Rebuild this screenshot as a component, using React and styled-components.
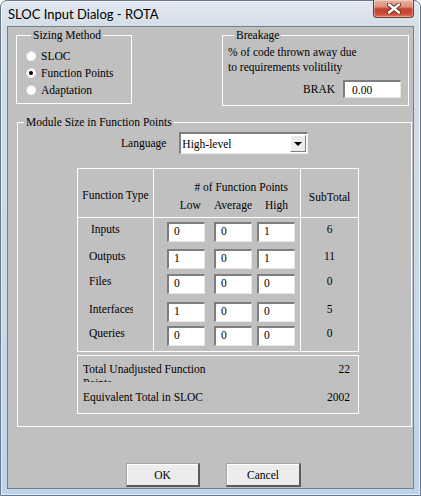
import React from "react";
import styled, { createGlobalStyle } from "styled-components";

const Global = createGlobalStyle`
  html, body { margin: 0; padding: 0; background: #ffffff; }
  body { width: 421px; height: 496px; overflow: hidden; }
  #root { width: 421px; height: 496px; }
`;

const serif = `"Liberation Serif", "Times New Roman", serif`;

const Window = styled.div`
  box-sizing: border-box;
  width: 421px;
  height: 496px;
  display: flex;
  flex-direction: column;
  padding: 0 6px 6px;
  border: 1px solid #65778a;
  border-radius: 7px 7px 0 0;
  background: linear-gradient(to bottom, #e2e9f0 0px, #d5dee7 25px, #cbd9e6 55%, #bcd4ea 100%);
  box-shadow: inset 0 0 0 1px rgba(255, 255, 255, 0.6);
`;

const TitleBar = styled.div`
  height: 25px;
  display: flex;
  align-items: flex-start;
  justify-content: space-between;
  padding-left: 1px;
`;

const TitleText = styled.span`
  font-family: "Segoe UI", Lato, "Noto Sans", sans-serif;
  font-size: 13px;
  line-height: 15px;
  margin-top: 6px;
  color: #000;
`;

const CloseButton = styled.div`
  box-sizing: border-box;
  width: 41px;
  height: 18px;
  margin-top: -1px;
  border: 1px solid #76372c;
  border-top: none;
  border-radius: 0 0 4px 4px;
  background: linear-gradient(to bottom, #e9b3a4 0%, #dc8e7a 40%, #c4442e 52%, #c84a34 78%, #dc7358 100%);
  box-shadow: inset 0 0 0 1px rgba(255, 255, 255, 0.35);
  display: flex;
  align-items: center;
  justify-content: center;
`;

const Client = styled.div`
  flex: 1;
  border: 1px solid #72818f;
  background: #c0c0c0;
  display: flex;
  flex-direction: column;
  font-family: ${serif};
  font-size: 11.5px;
  line-height: 14px;
  color: #000;
`;

const TopRow = styled.div`
  display: flex;
  align-items: flex-start;
  margin-top: 1px;
  padding-left: 8px;
`;

const Group = styled.fieldset`
  box-sizing: border-box;
  margin: 0;
  min-width: 0;
  border: 1px solid #ffffff;
  width: ${(p) => p.$w}px;
  margin-left: ${(p) => p.$ml || 0}px;
  margin-top: ${(p) => p.$mt || 0}px;
  padding: ${(p) => p.$pad};
`;

const Legend = styled.legend`
  padding: 0 2px;
  margin-left: 6px;
  line-height: 14px;
`;

const RadioRow = styled.label`
  display: flex;
  align-items: center;
  height: 17px;
  gap: 4px;
`;

const Radio = styled.span`
  box-sizing: border-box;
  width: 12px;
  height: 12px;
  flex: none;
  border-radius: 50%;
  border: 1px solid #b9b9b9;
  background: radial-gradient(circle at 62% 62%, #ffffff 0%, #ffffff 42%, #e8e8e8 68%, #a9a9a9 100%);
  display: flex;
  align-items: center;
  justify-content: center;
  &::after {
    content: "";
    width: 4px;
    height: 4px;
    border-radius: 50%;
    background: #000;
    display: ${(p) => (p.$checked ? "block" : "none")};
  }
`;

const Line = styled.div`
  line-height: 15px;
  white-space: nowrap;
`;

const BrakRow = styled.div`
  display: flex;
  justify-content: flex-end;
  align-items: center;
  gap: 8px;
  margin-top: 5px;
  padding-right: 7px;
`;

const TextBox = styled.input`
  box-sizing: border-box;
  margin: 0;
  width: ${(p) => p.$w}px;
  height: ${(p) => p.$h}px;
  background: #ffffff;
  border-style: solid;
  border-width: 2px 1px 1px 2px;
  border-color: #7e7e7e #e6e6e6 #e6e6e6 #7e7e7e;
  font-family: ${serif};
  font-size: 11.5px;
  color: #000;
  padding: 0 0 ${(p) => p.$pb || 0}px ${(p) => p.$pl}px;
  outline: none;
`;

const LanguageRow = styled.div`
  display: flex;
  align-items: center;
  gap: 13px;
  margin-left: 103px;
`;

const Select = styled.div`
  box-sizing: border-box;
  width: 129px;
  height: 22px;
  background: #ffffff;
  border-style: solid;
  border-width: 2px 1px 1px 2px;
  border-color: #7e7e7e #ececec #ececec #7e7e7e;
  display: flex;
  align-items: center;
  justify-content: space-between;
  padding: 0 1px 0 1px;
`;

const SelectButton = styled.div`
  box-sizing: border-box;
  width: 16px;
  height: 17px;
  background: #ececec;
  border-style: solid;
  border-width: 1px;
  border-color: #ffffff #808080 #808080 #ffffff;
  display: flex;
  align-items: center;
  justify-content: center;
  &::after {
    content: "";
    width: 0;
    height: 0;
    border-left: 4px solid transparent;
    border-right: 4px solid transparent;
    border-top: 4px solid #000;
  }
`;

const Table = styled.div`
  box-sizing: border-box;
  width: 282px;
  margin: 14px 0 0 59px;
  display: grid;
  grid-template-columns: 76px 147px 58px;
  border-top: 1px solid #ffffff;
  border-left: 1px solid #ffffff;
`;

const Cell = styled.div`
  box-sizing: border-box;
  border-right: 1px solid #ffffff;
  border-bottom: ${(p) => (p.$last ? "1px solid #ffffff" : "none")};
  height: ${(p) => p.$h}px;
`;

const HeadCell = styled(Cell)`
  border-bottom: 1px solid #ffffff;
  display: flex;
  flex-direction: column;
  align-items: ${(p) => p.$align || "center"};
  justify-content: ${(p) => p.$justify || "center"};
  padding-top: ${(p) => p.$pt || 0}px;
  padding-right: ${(p) => p.$pr || 0}px;
  white-space: nowrap;
`;

const SubHead = styled.div`
  display: flex;
  gap: 13px;
  margin-top: 4px;
`;

const LabelCell = styled(Cell)`
  padding: 4px 0 0 ${(p) => 11 + (p.$indent || 0)}px;
`;

const RowLabel = styled.div`
  width: 44px;
  overflow: hidden;
  white-space: nowrap;
`;

const PointsCell = styled(Cell)`
  display: flex;
  align-items: flex-start;
  padding: 4px 0 0 13px;
  & > input:nth-child(2) {
    margin: 0 5px 0 9px;
  }
`;

const SubCell = styled(Cell)`
  text-align: center;
  padding-top: 4px;
`;

const Totals = styled.div`
  box-sizing: border-box;
  width: 282px;
  margin: 3px 0 0 59px;
  border: 1px solid #ffffff;
  padding: 6px 8px 9px 5px;
  display: flex;
  flex-direction: column;
  gap: 8px;
`;

const TotalRow = styled.div`
  display: flex;
  justify-content: space-between;
  align-items: flex-start;
`;

const TotalLabel = styled.div`
  width: ${(p) => p.$w}px;
  height: ${(p) => p.$h}px;
  overflow: hidden;
`;

const ButtonRow = styled.div`
  display: flex;
  gap: 26px;
  margin: 36px 0 0 118px;
`;

const Button = styled.button`
  box-sizing: border-box;
  width: ${(p) => p.$w}px;
  height: 24px;
  margin: 0;
  padding: 0;
  background: #ececec;
  border-style: solid;
  border-width: 1px 2px 2px 1px;
  border-color: #a4a4a4 #5c5c5c #5c5c5c #a4a4a4;
  box-shadow: inset 1px 1px 0 #ffffff;
  font-family: ${serif};
  font-size: 11.5px;
  color: #000;
`;

const rows = [
  { name: "Inputs", indent: 2, vals: ["0", "0", "1"], sub: "6", h: 27 },
  { name: "Outputs", vals: ["1", "0", "1"], sub: "11", h: 25 },
  { name: "Files", vals: ["0", "0", "0"], sub: "0", h: 28 },
  { name: "Interfaces", vals: ["1", "0", "0"], sub: "5", h: 24 },
  { name: "Queries", vals: ["0", "0", "0"], sub: "0", h: 30 },
];

const CloseIcon = () => (
  <svg width="14" height="11" viewBox="0 0 14 11">
    <path d="M2 1.5 L12 9.5 M12 1.5 L2 9.5" stroke="#6a2a20" strokeWidth="4.2" strokeLinecap="round" />
    <path d="M2 1.5 L12 9.5 M12 1.5 L2 9.5" stroke="#ffffff" strokeWidth="2.4" strokeLinecap="round" />
  </svg>
);

export default function App() {
  return (
    <>
      <Global />
      <Window>
        <TitleBar>
          <TitleText>SLOC Input Dialog - ROTA</TitleText>
          <CloseButton>
            <CloseIcon />
          </CloseButton>
        </TitleBar>
        <Client>
          <TopRow>
            <Group $w={116} $pad="5px 0 5px 8px">
              <Legend>Sizing Method</Legend>
              <RadioRow>
                <Radio />
                SLOC
              </RadioRow>
              <RadioRow>
                <Radio $checked />
                Function Points
              </RadioRow>
              <RadioRow>
                <Radio />
                Adaptation
              </RadioRow>
            </Group>
            <Group $w={187} $ml={90} $pad="3px 0 7px 5px">
              <Legend>Breakage</Legend>
              <Line>% of code thrown away due</Line>
              <Line>to requirements volitility</Line>
              <BrakRow>
                <span>BRAK</span>
                <TextBox $w={58} $h={18} $pl={7} defaultValue="0.00" readOnly />
              </BrakRow>
            </Group>
          </TopRow>
          <Group $w={395} $ml={9} $mt={9} $pad="3px 0 12px 0">
            <Legend>Module Size in Function Points</Legend>
            <LanguageRow>
              <span>Language</span>
              <Select>
                <span>High-level</span>
                <SelectButton />
              </Select>
            </LanguageRow>
            <Table>
              <HeadCell $h={49} $pt={3}>Function Type</HeadCell>
              <HeadCell $h={49} $align="flex-end" $justify="flex-start" $pt={11} $pr={12}>
                <div># of Function Points</div>
                <SubHead>
                  <span>Low</span>
                  <span>Average</span>
                  <span>High</span>
                </SubHead>
              </HeadCell>
              <HeadCell $h={49} $pt={7}>SubTotal</HeadCell>
              {rows.map((r, i) => {
                const last = i === rows.length - 1;
                return (
                  <React.Fragment key={r.name}>
                    <LabelCell $h={r.h} $last={last} $indent={r.indent}>
                      <RowLabel>{r.name}</RowLabel>
                    </LabelCell>
                    <PointsCell $h={r.h} $last={last}>
                      {r.vals.map((v, j) => (
                        <TextBox key={j} $w={38} $h={20} $pl={5} $pb={3} defaultValue={v} readOnly />
                      ))}
                    </PointsCell>
                    <SubCell $h={r.h} $last={last}>{r.sub}</SubCell>
                  </React.Fragment>
                );
              })}
            </Table>
            <Totals>
              <TotalRow>
                <TotalLabel $w={135} $h={20}>Total Unadjusted Function Points</TotalLabel>
                <span>22</span>
              </TotalRow>
              <TotalRow>
                <TotalLabel $w={200} $h={14}>Equivalent Total in SLOC</TotalLabel>
                <span>2002</span>
              </TotalRow>
            </Totals>
          </Group>
          <ButtonRow>
            <Button $w={74}>OK</Button>
            <Button $w={75}>Cancel</Button>
          </ButtonRow>
        </Client>
      </Window>
    </>
  );
}
